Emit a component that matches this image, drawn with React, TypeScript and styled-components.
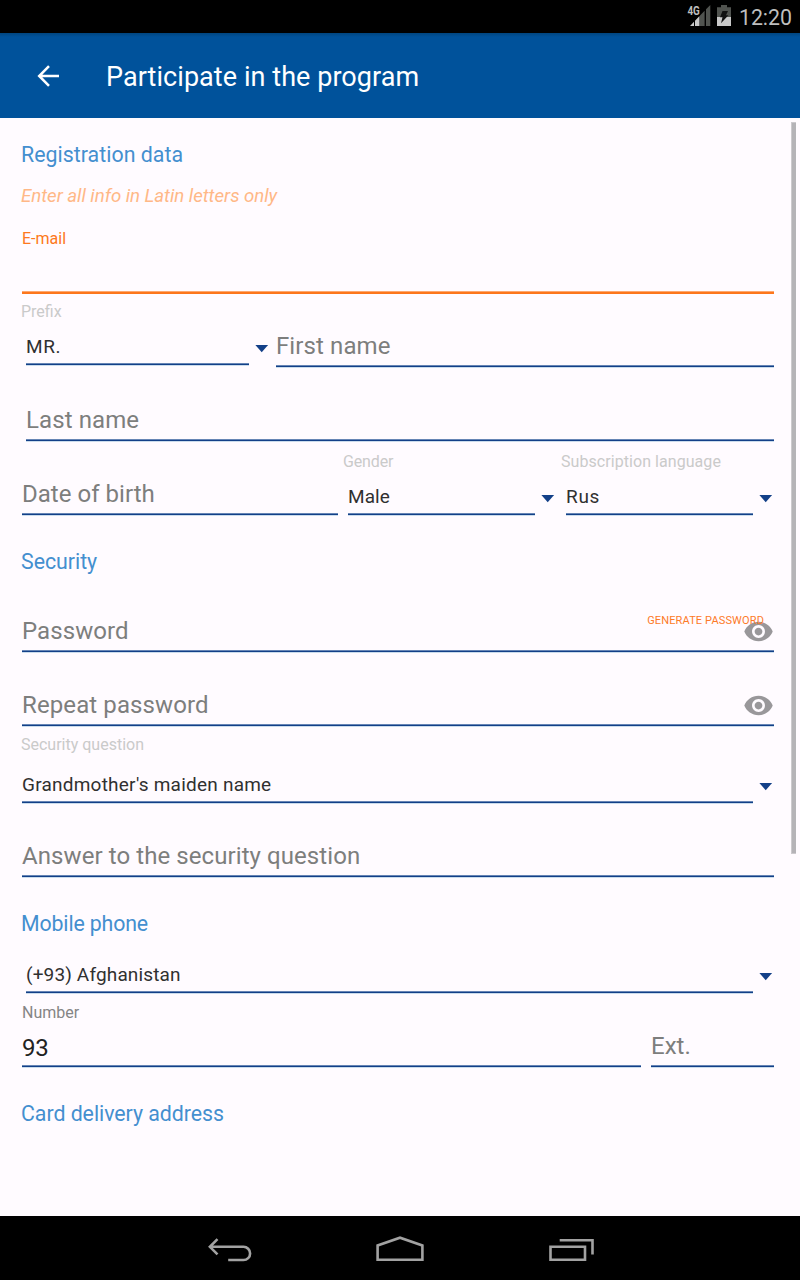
import React from 'react';
import styled, { createGlobalStyle } from 'styled-components';

const GlobalStyle = createGlobalStyle`
  * { box-sizing: border-box; }
  body {
    margin: 0;
    background: #fffbff;
    font-family: Roboto, "Liberation Sans", sans-serif;
    overflow: hidden;
  }
  svg { display: block; }
`;

const Screen = styled.div`
  display: flex;
  flex-direction: column;
  width: 800px;
  height: 1280px;
  background: #fffbff;
`;

const StatusBar = styled.header`
  display: flex;
  justify-content: flex-end;
  height: 33px;
  flex: none;
  padding-right: 8px;
  background: #000;
`;

const StatusIcons = styled.svg`
  width: 51px;
  height: 33px;
  overflow: visible;
`;

const Clock = styled.time`
  width: 53px;
  margin: 5px 0 0 4px;
  color: #bebebe;
  font-size: 21.33px;
  line-height: 25px;
  letter-spacing: -0.05px;
`;

const AppBar = styled.div`
  display: flex;
  align-items: center;
  height: 85px;
  flex: none;
  padding-left: 32px;
  background: linear-gradient(#00457f 0, #00529b 4px);
`;

const BackArrow = styled.svg`
  width: 32px;
  height: 32px;
`;

const Title = styled.h1`
  margin: 3px 0 0 42px;
  color: #fff;
  font-size: 27px;
  font-weight: 400;
  line-height: 32px;
  letter-spacing: 0.06px;
`;

const Body = styled.main`
  display: flex;
  flex: 1;
  justify-content: space-between;
  min-height: 0;
`;

const Form = styled.form`
  display: flex;
  flex-direction: column;
  width: 774px;
`;

const Intro = styled.div`
  height: 102px;
  padding: 24px 0 0 21px;
`;

const SectionHeading = styled.h2<{ $track?: number }>`
  margin: 0;
  color: #448fcf;
  font-size: 21.33px;
  font-weight: 400;
  line-height: 25px;
  letter-spacing: ${(p) => p.$track ?? 0}px;
`;

const SectionStart = styled.div`
  height: 63px;
  flex: none;
  padding: 33px 0 0 21px;
`;

const Hint = styled.p`
  margin: 18px 0 0;
  color: #ffb887;
  font-size: 18.67px;
  font-style: italic;
  line-height: 22px;
  letter-spacing: -0.04px;
`;

const Row = styled.div<{ $height?: number; $indent?: number }>`
  display: flex;
  flex: none;
  height: ${(p) => p.$height ?? 74}px;
  padding-left: ${(p) => p.$indent ?? 22}px;
`;

const Field = styled.label<{ $width?: number; $before?: number }>`
  position: relative;
  display: flex;
  flex-direction: column;
  ${(p) => (p.$width ? `width: ${p.$width}px; flex: none;` : 'flex: 1;')}
  margin-left: ${(p) => p.$before ?? 0}px;
`;

const FloatingLabel = styled.span<{ $active?: boolean }>`
  margin-top: 9px;
  color: ${(p) => (p.$active ? '#fd7820' : '#858585')};
  font-size: 16px;
  line-height: 19px;
  letter-spacing: 0;
`;

const Placeholder = styled.span<{ $track?: number }>`
  margin-top: auto;
  padding-bottom: 5px;
  color: #7d7e7d;
  font-size: 24px;
  line-height: 28px;
  letter-spacing: ${(p) => p.$track ?? 0.1}px;
`;

const Entry = styled(Placeholder)`
  padding-bottom: 3px;
  color: #222;
  letter-spacing: -0.3px;
`;

const Line = styled.i<{ $active?: boolean; $auto?: boolean }>`
  display: block;
  flex: none;
  height: 3px;
  margin-top: ${(p) => (p.$auto ? 'auto' : 0)};
  background: ${(p) =>
    p.$active
      ? 'linear-gradient(#fda86f 1px, #fd761c 1px)'
      : 'linear-gradient(#6685b5 1px, #134088 1px 2px, #cbdcec 2px)'};
`;

const SpinnerBox = styled.div<{ $width?: number; $before?: number; $lift?: number }>`
  display: flex;
  flex-direction: column;
  ${(p) => (p.$width ? `width: ${p.$width}px; flex: none;` : 'flex: 1;')}
  margin-left: ${(p) => p.$before ?? 0}px;
  padding-bottom: ${(p) => p.$lift ?? 0}px;
`;

const SpinnerLabel = styled.span<{ $top: number; $track: number }>`
  margin-top: ${(p) => p.$top}px;
  color: #cacaca;
  font-size: 16px;
  line-height: 19px;
  letter-spacing: ${(p) => p.$track}px;
`;

const SpinnerControl = styled.div<{ $indent: number }>`
  display: flex;
  align-items: flex-end;
  margin-top: auto;
  padding-left: ${(p) => p.$indent}px;
`;

const SpinnerFace = styled.div`
  flex: 1;
`;

const SpinnerValue = styled.div<{ $track?: number }>`
  padding-bottom: 5px;
  color: #303030;
  font-size: 19px;
  line-height: 23px;
  letter-spacing: ${(p) => p.$track ?? 0.23}px;
`;

const DropArrow = styled.svg`
  flex: none;
  width: 21px;
  height: 21px;
`;

const EyeIcon = styled.svg`
  position: absolute;
  right: 0;
  bottom: 6px;
  width: 31px;
  height: 31px;
`;

const GenerateButton = styled.span`
  position: absolute;
  top: 35px;
  right: 10px;
  color: #fd7a28;
  font-size: 11px;
  line-height: 13px;
  letter-spacing: 0.14px;
`;

const Scrollbar = styled.div`
  width: 5px;
  height: 732px;
  margin: 4px 4px 0 0;
  border: 1px solid #ccc9cd;
  border-width: 1px 0 1px 1px;
  background: #b5b3b7;
`;

const NavBar = styled.nav`
  display: flex;
  justify-content: center;
  height: 64px;
  flex: none;
  background: #000;
`;

const NavIcon = styled.svg`
  width: 170px;
  height: 64px;
  fill: none;
  stroke: #a2a2a2;
  stroke-width: 2.6;
`;

type SpinnerProps = {
  label?: string;
  value: string;
  width?: number;
  before?: number;
  lift?: number;
  labelTop?: number;
  labelTrack?: number;
  indent?: number;
  track?: number;
};

function Spinner({ label, value, width, before, lift, labelTop = 8, labelTrack = 0, indent = 5, track }: SpinnerProps) {
  return (
    <SpinnerBox $width={width} $before={before} $lift={lift}>
      {label && <SpinnerLabel $top={labelTop} $track={labelTrack}>{label}</SpinnerLabel>}
      <SpinnerControl $indent={indent}>
        <SpinnerFace>
          <SpinnerValue $track={track}>{value}</SpinnerValue>
          <Line />
        </SpinnerFace>
        <DropArrow viewBox="0 0 21 21">
          <path d="M6.4 0h12.7l-6.35 7.3z" fill="#134088" />
        </DropArrow>
      </SpinnerControl>
    </SpinnerBox>
  );
}

type TextFieldProps = { hint: string; width?: number; before?: number; track?: number; children?: React.ReactNode };

function TextField({ hint, width, before, track, children }: TextFieldProps) {
  return (
    <Field $width={width} $before={before}>
      <Placeholder $track={track}>{hint}</Placeholder>
      <Line />
      {children}
    </Field>
  );
}

function Eye() {
  return (
    <EyeIcon viewBox="0 0 24 24">
      <path
        fill="#99979a"
        d="M12 4.5C7 4.5 2.73 7.61 1 12c1.73 4.39 6 7.5 11 7.5s9.27-3.11 11-7.5c-1.73-4.39-6-7.5-11-7.5zM12 17c-2.76 0-5-2.24-5-5s2.24-5 5-5 5 2.24 5 5-2.24 5-5 5zm0-8c-1.66 0-3 1.34-3 3s1.34 3 3 3 3-1.34 3-3-1.34-3-3-3z"
      />
    </EyeIcon>
  );
}

export default function App() {
  return (
    <Screen>
      <GlobalStyle />
      <StatusBar>
        <StatusIcons viewBox="684 0 51 33">
          <path d="M700 15.5l4.6-4.8V26H700zM706 9.2l4.3-4.2v21H706z" fill="#50534f" />
          <path d="M690 26l4-4.2V26zM695 20.8l4.5-4.8v10H695z" fill="#c9c9c9" />
          <text x="687.4" y="15.2" fontSize="12.5" fontWeight="700" fill="#bdbdbd" textLength="12.4" lengthAdjust="spacingAndGlyphs">4G</text>
          <path d="M717 7.3h4V5h6v2.3h4V17h-14z" fill="#50534f" />
          <path d="M717 17h14v9h-14z" fill="#c9c9c9" />
          <path d="M722.5 11h5.5l-2 4.2h2.4L721 23.2l1.5-6H720z" fill="#111" />
        </StatusIcons>
        <Clock>12:20</Clock>
      </StatusBar>
      <AppBar>
        <BackArrow viewBox="0 0 32 32">
          <path d="M27 16H8M17 6.2L7.2 16l9.8 9.8" fill="none" stroke="#fff" strokeWidth="2.5" />
        </BackArrow>
        <Title>Participate in the program</Title>
      </AppBar>
      <Body>
        <Form>
          <Intro>
            <SectionHeading $track={0.03}>Registration data</SectionHeading>
            <Hint>Enter all info in Latin letters only</Hint>
          </Intro>
          <Row>
            <Field>
              <FloatingLabel $active>E-mail</FloatingLabel>
              <Line $active $auto />
            </Field>
          </Row>
          <Row $indent={21}>
            <Spinner label="Prefix" value="MR." width={249} lift={2} track={0.6} />
            <TextField hint="First name" before={6} />
          </Row>
          <Row $indent={26}>
            <TextField hint="Last name" />
          </Row>
          <Row>
            <TextField hint="Date of birth" width={316} track={0.03} />
            <Spinner label="Gender" value="Male" width={213} before={5} labelTop={10} labelTrack={-0.15} track={0.1} />
            <Spinner label="Subscription language" value="Rus" width={213} before={5} labelTop={10} labelTrack={0.06} track={0.7} />
          </Row>
          <SectionStart>
            <SectionHeading $track={-0.03}>Security</SectionHeading>
          </SectionStart>
          <Row>
            <TextField hint="Password" track={0.08}>
              <Eye />
              <GenerateButton>GENERATE PASSWORD</GenerateButton>
            </TextField>
          </Row>
          <Row>
            <TextField hint="Repeat password" track={0.11}>
              <Eye />
            </TextField>
          </Row>
          <Row $height={77} $indent={21}>
            <Spinner label="Security question" value="Grandmother's maiden name" indent={1} labelTrack={0} />
          </Row>
          <Row>
            <TextField hint="Answer to the security question" track={0.08} />
          </Row>
          <SectionStart>
            <SectionHeading $track={-0.14}>Mobile phone</SectionHeading>
          </SectionStart>
          <Row $height={53} $indent={21}>
            <Spinner value="(+93) Afghanistan" track={0.15} />
          </Row>
          <Row>
            <Field $width={619}>
              <FloatingLabel>Number</FloatingLabel>
              <Entry>93</Entry>
              <Line />
            </Field>
            <TextField hint="Ext." width={123} before={10} track={0} />
          </Row>
          <SectionStart>
            <SectionHeading $track={-0.04}>Card delivery address</SectionHeading>
          </SectionStart>
        </Form>
        <Scrollbar />
      </Body>
      <NavBar>
        <NavIcon viewBox="145 1216 170 64">
          <path d="M217.5 1239.2l-7.6 7.6 7.6 7.6M210.5 1246.8H243.5a6.6 6.6 0 0 1 0 13.2h-15.3" />
        </NavIcon>
        <NavIcon viewBox="315 1216 170 64">
          <path d="M377.6 1259.7v-14.3l22.4-7.7 22.4 7.7v14.3z" />
        </NavIcon>
        <NavIcon viewBox="485 1216 170 64">
          <path d="M550.5 1246.8h34.5v12.9h-34.5zM559.7 1240.2h32.8v14.2" />
        </NavIcon>
      </NavBar>
    </Screen>
  );
}
